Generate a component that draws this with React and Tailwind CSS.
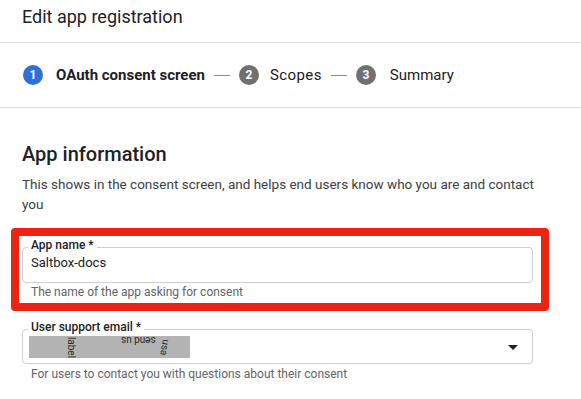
import React from "react";

function Step({ n, active, label, gap }) {
  return (
    <div className="flex items-center">
      <div
        className={
          "w-[20px] h-[20px] rounded-full flex items-center justify-center text-white text-[12px] font-bold leading-none " +
          (active ? "bg-[#2f6fd8]" : "bg-[#707070]")
        }
      >
        {n}
      </div>
      <span
        className={
          gap + " text-[15px] leading-[20px] text-[#202124] " + (active ? "font-bold" : "font-normal")
        }
      >
        {label}
      </span>
    </div>
  );
}

function Dash() {
  return <div className="mx-[9px] w-[16px] h-px bg-[#8a8a8a]" />;
}

export default function App() {
  return (
    <div className="w-[581px] h-[399px] bg-white overflow-hidden font-['Roboto',_'Liberation_Sans',_sans-serif] text-[#202124]">
      {/* Header */}
      <div className="h-[43px] border-b border-[#dedede] pl-[22px] pt-[5px]">
        <h1 className="text-[18px] leading-[24px] font-normal text-[#202124]">Edit app registration</h1>
      </div>

      {/* Stepper */}
      <div className="h-[65px] border-b border-[#dedede] pl-[23px] flex items-center">
        <Step n="1" active label="OAuth consent screen" gap="ml-[13px]" />
        <Dash />
        <Step n="2" label="Scopes" gap="ml-[11px] tracking-[0.4px]" />
        <Dash />
        <Step n="3" label="Summary" gap="ml-[14px]" />
      </div>

      {/* Content */}
      <div className="pl-[22px] pt-[32px]">
        <h2 className="text-[20px] leading-[28px] font-medium text-[#202124]">App information</h2>
        <p className="mt-[6px] w-[520px] text-[13.5px] leading-[20px] text-[#3c4043]">
          This shows in the consent screen, and helps end users know who you are and contact you
        </p>

        {/* Field 1 */}
        <div className="relative mt-[33px] w-[511px]">
          <div className="relative h-[36px] rounded-[4px] border border-[#cfcfcf] pl-[8px] pt-[5px]">
            <span className="absolute top-[-10px] left-[5px] bg-white px-[3px] text-[12px] leading-[14px] font-medium text-[#202124]">
              App name *
            </span>
            <div className="text-[13px] leading-[20px] text-[#202124]">Saltbox-docs</div>
          </div>
          <div className="mt-[1px] pl-[9px] text-[12px] leading-[16px] text-[#5f6368]">
            The name of the app asking for consent
          </div>
          <div className="absolute top-[-19px] bottom-[-11px] left-[-11px] right-[-16px] border-[8px] border-[#ee2211] rounded-[4px] pointer-events-none" />
        </div>

        {/* Field 2 */}
        <div className="mt-[29px] w-[511px]">
          <div className="relative h-[35px] rounded-[4px] border border-[#cfcfcf] pl-[6px] pr-[7px] flex items-center justify-between">
            <span className="absolute top-[-10px] left-[5px] bg-white px-[3px] text-[12px] leading-[14px] font-medium text-[#202124]">
              User support email *
            </span>
            <div className="relative mt-[1px] w-[161px] h-[22px] bg-[#b3b3b3] overflow-hidden text-[10px] leading-[11px] text-[#2a2a2a]">
              <span className="absolute left-[32px] top-[6px] rotate-90">label</span>
              <span className="absolute left-[92px] top-[-1px] rotate-180">send us</span>
              <span className="absolute left-[128px] top-[6px] rotate-[100deg]">usa</span>
            </div>
            <svg width="24" height="24" viewBox="0 0 24 24" className="text-[#202124]">
              <path d="M7 10l5 5 5-5z" fill="currentColor" />
            </svg>
          </div>
          <div className="mt-[2px] pl-[9px] text-[12px] leading-[16px] text-[#5f6368]">
            For users to contact you with questions about their consent
          </div>
        </div>
      </div>
    </div>
  );
}
